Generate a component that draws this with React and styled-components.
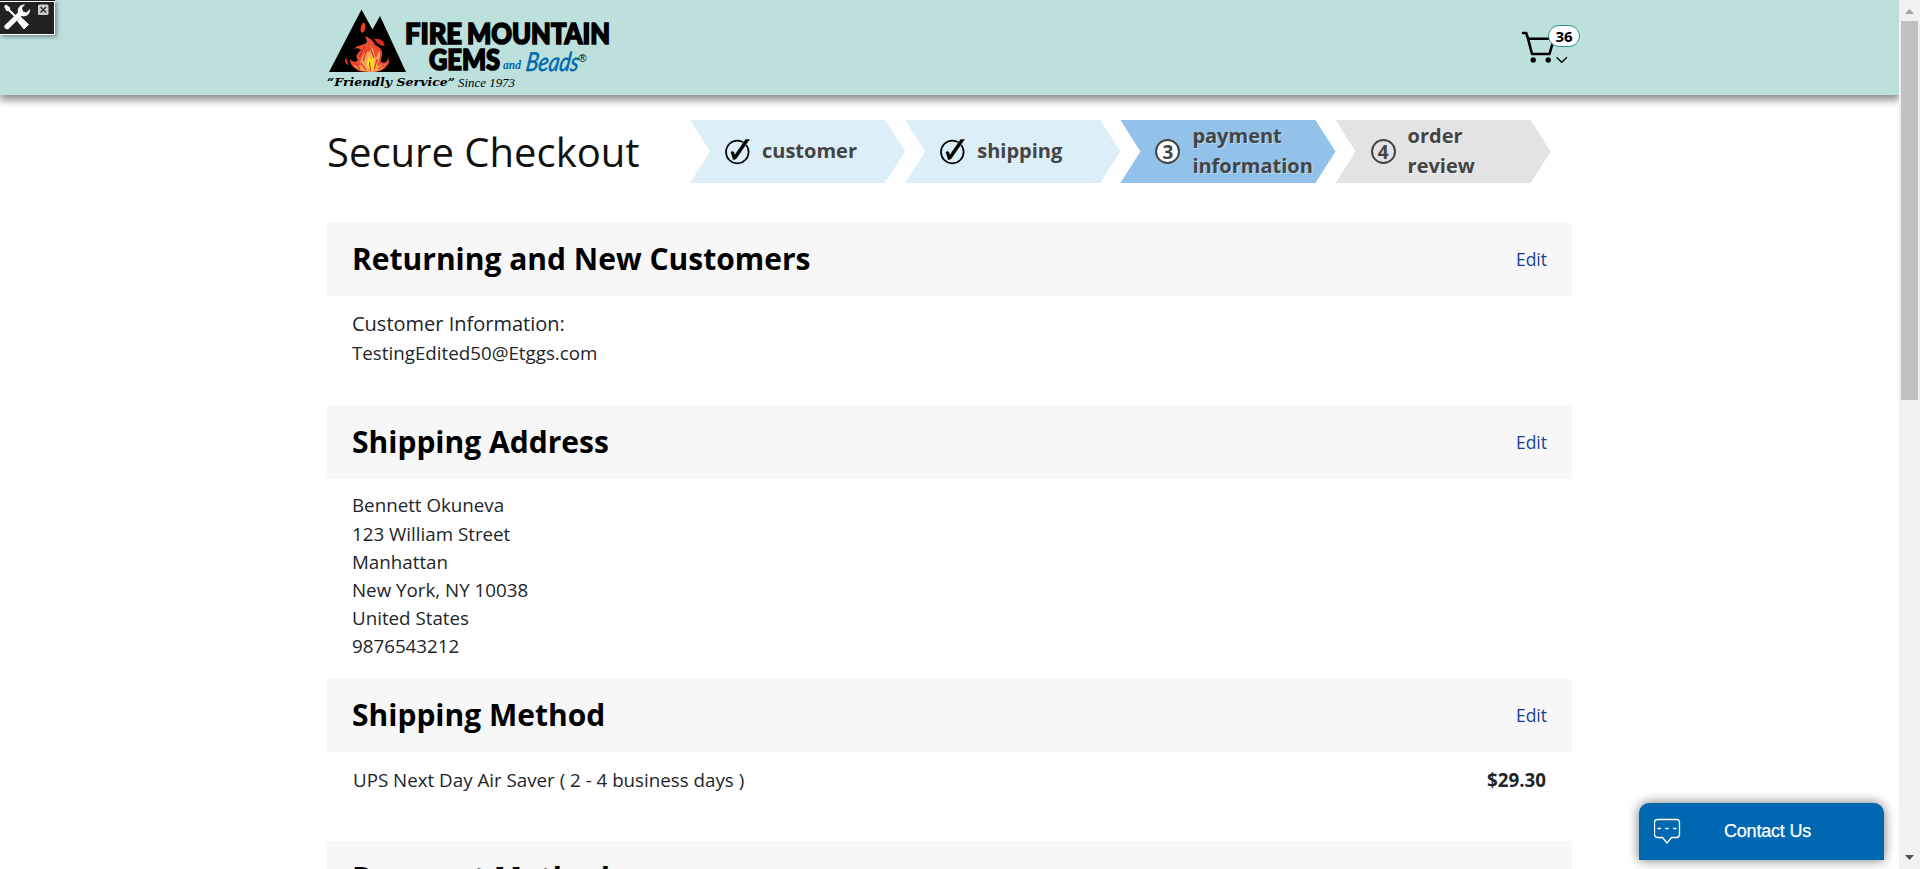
import React from "react";
import styled, { createGlobalStyle, css } from "styled-components";

const GlobalStyle = createGlobalStyle`
  * { box-sizing: border-box; }
  html, body { margin: 0; height: 100%; overflow: hidden; background: #fff; }
  body { font-family: "Open Sans", sans-serif; color: #212529; }
`;

const Viewport = styled.div`
  display: flex;
  height: 869px;
  overflow: hidden;
  position: relative;
`;

const Page = styled.div`
  flex: 1;
  min-width: 0;
  height: 100%;
  overflow: hidden;
`;

const Header = styled.header`
  height: 95px;
  background: #bce1dd;
  box-shadow: 0 4px 8px 1px rgba(0, 0, 0, 0.45);
  position: relative;
`;

const HeaderInner = styled.div`
  width: 1245px;
  height: 95px;
  margin: 0 auto;
  display: flex;
  justify-content: space-between;
  align-items: flex-start;
`;

const Logo = styled.svg`
  display: block;
  flex: none;
`;

const CartButton = styled.div`
  position: relative;
  width: 62px;
  height: 48px;
  margin-top: 22px;
`;

const CartBadge = styled.span`
  position: absolute;
  left: 38px;
  top: 3px;
  width: 32px;
  height: 22px;
  border: 1px solid #27968c;
  border-radius: 11px;
  background: #fff;
  color: #000;
  font-size: 15px;
  font-weight: 700;
  line-height: 20px;
  text-align: center;
`;

const CartIcon = styled.svg`
  display: block;
  overflow: visible;
`;

const Content = styled.main`
  width: 1245px;
  margin: 0 auto;
`;

const TitleRow = styled.div`
  display: flex;
  align-items: flex-start;
  height: 128px;
  padding-top: 25px;
`;

const PageTitle = styled.h1`
  width: 363px;
  margin: 0;
  font-size: 40px;
  font-weight: 400;
  line-height: 64px;
  color: #111;
`;

const Steps = styled.ol`
  display: flex;
  margin: 0;
  padding: 0;
  list-style: none;
`;

const tones = { done: "#dceef8", current: "#92c2ea", upcoming: "#e3e3e3" };

const StepItem = styled.li`
  display: flex;
  align-items: center;
  gap: 12px;
  width: 215.2px;
  height: 63px;
  padding-left: 35px;
  background: ${(p) => tones[p.$tone]};
  clip-path: polygon(0 0, 195px 0, 100% 50%, 195px 100%, 0 100%, 20px 50%);
  color: #444;
  font-size: 20px;
  font-weight: 700;
  line-height: 30px;
  text-shadow: ${(p) => (p.$tone === "done" ? "none" : "1px 1px 0 rgba(255, 255, 255, 0.4)")};
`;

const StepNumber = styled.span`
  width: 25px;
  height: 25px;
  border: 2px solid #444;
  border-radius: 50%;
  background: ${(p) => (p.$filled ? "#fff" : "transparent")};
  font-size: 19px;
  line-height: 22px;
  text-align: center;
  text-shadow: none;
  flex: none;
`;

const StepLabel = styled.span`
  width: 124px;
  position: relative;
  top: -1px;
`;

const CheckIcon = styled.svg`
  flex: none;
  overflow: visible;
`;

const Section = styled.section`
  height: ${(p) => p.$height}px;
`;

const SectionHeader = styled.div`
  display: flex;
  justify-content: space-between;
  align-items: center;
  height: ${(p) => p.$height || 73}px;
  padding: 0 25px ${(p) => (p.$height ? 0 : 1)}px;
  background: #f7f7f7;
`;

const SectionTitle = styled.h2`
  margin: 0;
  font-size: 30px;
  font-weight: 700;
  line-height: 40px;
  color: #000;
`;

const EditLink = styled.a`
  color: #1c3f94;
  font-size: 17.5px;
  line-height: 26px;
`;

const SectionBody = styled.div`
  padding: ${(p) => p.$top}px 25px 0;
  font-size: 18.75px;
  line-height: 28px;
`;

const Line = styled.div`
  ${(p) => p.$lead && css`line-height: 30px;`}
  ${(p) => p.$large && css`font-size: 20px;`}
`;

const MethodRow = styled.div`
  display: flex;
  justify-content: space-between;
  padding: 0 1px;
`;

const Price = styled.strong`
  font-weight: 700;
`;

const Scrollbar = styled.div`
  display: flex;
  flex-direction: column;
  align-items: center;
  justify-content: space-between;
  width: 21px;
  height: 100%;
  background: #f1f1f1;
`;

const ScrollTop = styled.div`
  display: flex;
  flex-direction: column;
`;

const ScrollArrow = styled.svg`
  display: block;
  width: 17px;
  height: 21px;
`;

const ScrollThumb = styled.div`
  width: 17px;
  height: 379px;
  background: #c1c1c1;
`;

const ToolsWidget = styled.div`
  position: absolute;
  left: 0;
  top: 0;
  width: 55px;
  height: 35px;
  background: #222;
  border-top: 1px solid #222;
  box-shadow: inset -1px -1px 0 #fff, inset 0 1px 0 #fff, 2px 2px 4px rgba(0, 0, 0, 0.35);
`;

const ContactButton = styled.div`
  position: absolute;
  left: 1639px;
  top: 803px;
  display: flex;
  align-items: center;
  width: 245px;
  height: 57px;
  padding-left: 15px;
  border-radius: 10px 10px 0 0;
  background: #0067b1;
  box-shadow: 0 0 12px rgba(0, 0, 0, 0.55);
  color: #fff;
  font-family: "Liberation Sans", Arial, sans-serif;
  font-size: 18px;
  letter-spacing: -0.2px;
`;

const ContactLabel = styled.span`
  margin-left: 43px;
  padding-bottom: 2px;
  line-height: 24px;
  -webkit-text-stroke: 0.25px #fff;
`;

function FireMountainLogo() {
  return (
    <Logo width="300" height="95" viewBox="327 0 300 95">
      <path d="M329 72 361.5 9.5 372.5 29.5 380 16 406 72Z" fill="#000" />
      <path d="M346 57C343.500 62 346.500 65 349 64.500 346.500 62 347 60 346 57Z" fill="#ee2e24" />
      <path d="M350 59C352 62 356 63 358 60 355 57 357 53 361 50 359 48 356 48 354 49 358 44 364 46 367 42 367 40 366 38 365 36 370 38 374 41 375 45 379 47 382 49 382 53 382 57 380 60 381 62 384 64 387 62 388 59 389 67 383 71 375 72L361 71.500C354 69 350 65 350 59Z" fill="#ee4b37" />
      <path d="M354 65 361 66C359 61 362 56 367 50 368 54 371 52 370 46 375 49 373 54 376 58L379 51C382 55 378 62 377 66L386 64C383 70 376 72 370 72 362 71 357 70 354 65Z" fill="#faa45b" />
      <path d="M367 66C366 62 368 60 369 56L372 61 373 54C375 58 373 62 374 66L377 60C378 65 375 69 371 71.500Z" fill="#ffe01b" />
      <path d="M370.500 71 369.500 62M374 69 377.500 59M366 70 361 63M363 61 367 50M360 69 355 63M378 69 384 65M374 58 370 47M359 57 365 46" fill="none" stroke="#d9301f" strokeWidth="1.200" />
      <ellipse cx="363" cy="27.800" rx="2.200" ry="4.800" transform="rotate(12 363 27.800)" fill="#f23b2f" />
      <path d="M374 39C380 38 385 41 384.500 46 380 46 377 43 374 39Z" fill="#d92a24" />
      <path d="M388 55C390 60 387 64 382 67 388 68 391 61 388 55Z" fill="#f04e37" />
      <g fontFamily="Lato, sans-serif" fontWeight="900" fill="#000" stroke="#000" strokeWidth="1.700">
        <text x="405" y="44.300" fontSize="28.500" textLength="57" lengthAdjust="spacingAndGlyphs">FIRE</text>
        <text x="467" y="44.300" fontSize="28.500" textLength="143" lengthAdjust="spacingAndGlyphs">MOUNTAIN</text>
        <text x="429" y="70" fontSize="28.500" textLength="71" lengthAdjust="spacingAndGlyphs">GEMS</text>
      </g>
      <g fill="#0067b1">
        <text x="503" y="69" fontSize="13" fontStyle="italic" fontWeight="700" fontFamily="Liberation Serif, serif" textLength="18" lengthAdjust="spacingAndGlyphs">and</text>
        <text transform="translate(525 71) skewX(-8)" fontSize="26" fontStyle="italic" fontWeight="400" fontFamily="Lato, sans-serif" stroke="#0067b1" strokeWidth="0.500" textLength="53" lengthAdjust="spacingAndGlyphs">Beads</text>
      </g>
      <text x="578.500" y="62.300" fontSize="11" fontFamily="Liberation Sans, sans-serif">®</text>
      <text x="327" y="86" fontSize="11.800" fontWeight="700" fontStyle="italic" fontFamily="DejaVu Serif, serif" textLength="128" lengthAdjust="spacingAndGlyphs">“Friendly Service”</text>
      <text x="458" y="86.800" fontSize="11.500" fontStyle="italic" fontFamily="Liberation Serif, serif" textLength="57" lengthAdjust="spacingAndGlyphs">Since 1973</text>
    </Logo>
  );
}

function Cart() {
  return (
    <CartButton>
      <CartIcon width="62" height="48" viewBox="1510 22 62 48" fill="none" stroke="#000">
        <path d="M1523 33h3.200l1.800 5.500L1532 54H1549.500L1553.500 40V38.800H1528" strokeWidth="2.600" strokeLinecap="round" strokeLinejoin="round" />
        <circle cx="1533.200" cy="60" r="2.700" fill="#000" stroke="none" />
        <circle cx="1548.200" cy="60" r="2.700" fill="#000" stroke="none" />
        <path d="M1556.500 57.300 1561.700 62.300 1567 57.300" strokeWidth="1.200" />
      </CartIcon>
      <CartBadge>36</CartBadge>
    </CartButton>
  );
}

function Step({ tone, number, children }) {
  return (
    <StepItem $tone={tone}>
      {tone === "done" ? (
        <CheckIcon width="25" height="25" viewBox="0 0 25 25">
          <circle cx="12.300" cy="13" r="11.300" fill="none" stroke="#000" strokeWidth="1.700" />
          <path d="M5.500 13.200C7 11.400 9.300 11.600 9.900 15.300L20.500 0H25.200L11.600 19.700C10 21 8.300 21.200 7.800 20.700Z" fill="#000" stroke="#dceef8" strokeWidth="0.500" />
        </CheckIcon>
      ) : (
        <StepNumber $filled={tone === "current"}>{number}</StepNumber>
      )}
      <StepLabel>{children}</StepLabel>
    </StepItem>
  );
}

function Panel({ title, height, headerHeight, top, editable = true, children }) {
  return (
    <Section $height={height}>
      <SectionHeader $height={headerHeight}>
        <SectionTitle>{title}</SectionTitle>
        {editable && <EditLink>Edit</EditLink>}
      </SectionHeader>
      <SectionBody $top={top}>{children}</SectionBody>
    </Section>
  );
}

export default function App() {
  return (
    <>
      <GlobalStyle />
      <Viewport>
        <Page>
          <Header>
            <HeaderInner>
              <FireMountainLogo />
              <Cart />
            </HeaderInner>
          </Header>
          <Content>
            <TitleRow>
              <PageTitle>Secure Checkout</PageTitle>
              <Steps>
                <Step tone="done">customer</Step>
                <Step tone="done">shipping</Step>
                <Step tone="current" number="3">payment information</Step>
                <Step tone="upcoming" number="4">order<br />review</Step>
              </Steps>
            </TitleRow>
            <Panel title="Returning and New Customers" height={182} top={13}>
              <Line $lead $large>Customer Information:</Line>
              <Line>TestingEdited50@Etggs.com</Line>
            </Panel>
            <Panel title="Shipping Address" height={274} headerHeight={74} top={11}>
              <Line $lead>Bennett Okuneva</Line>
              <Line>123 William Street</Line>
              <Line>Manhattan</Line>
              <Line>New York, NY 10038</Line>
              <Line>United States</Line>
              <Line>9876543212</Line>
            </Panel>
            <Panel title="Shipping Method" height={162} top={14}>
              <MethodRow>
                <span>UPS Next Day Air Saver ( 2 - 4 business days )</span>
                <Price>$29.30</Price>
              </MethodRow>
            </Panel>
            <Panel title="Payment Method" height={100} headerHeight={74} editable={false} />
          </Content>
        </Page>
        <Scrollbar>
          <ScrollTop>
            <ScrollArrow viewBox="0 0 17 21"><path d="M4 14 8.500 9 13 14Z" fill="#a3a3a3" /></ScrollArrow>
            <ScrollThumb />
          </ScrollTop>
          <ScrollArrow viewBox="0 0 17 21"><path d="M4 7 8.500 12 13 7Z" fill="#505050" /></ScrollArrow>
        </Scrollbar>
        <ToolsWidget>
          <svg width="54" height="33" viewBox="0 1 54 33">
            <path d="M4 6.500 6 4.500 10 7.500V9.500L17 16.500 15.500 18 8.500 11H6.500Z" fill="#fff" />
            <path d="M20.500 17 28.500 24.500 24 29 17.500 21Z" fill="#fff" stroke="#fff" strokeLinejoin="round" />
            <path d="M4.500 25.500 18 12.500C17 8 20 4 25 4.500L22 8 23 11.500 26.500 12.500 30 9C30.500 14 26 17.500 21.500 16L8.500 29C6 30 3.500 27.500 4.500 25.500Z" fill="#fff" />
            <rect x="38" y="4.500" width="10.500" height="10.500" rx="1.500" fill="#ccc" />
            <path d="M40.500 7 46 12.500M46 7 40.500 12.500" stroke="#333" strokeWidth="1.500" />
          </svg>
        </ToolsWidget>
        <ContactButton>
          <svg width="27" height="27" viewBox="1654 819 27 27" fill="none" stroke="#fff">
            <path d="M1657.500 820.500H1676.500Q1679.500 820.500 1679.500 823.500V835.500Q1679.500 838.500 1676.500 838.500H1671.500L1667 844 1662.500 838.500H1657.500Q1654.500 838.500 1654.500 835.500V823.500Q1654.500 820.500 1657.500 820.500Z" strokeWidth="1.300" />
            <path d="M1657.500 829.500h3.500M1665.200 829.500h3.500M1673 829.500h3.500" strokeWidth="1.600" />
          </svg>
          <ContactLabel>Contact Us</ContactLabel>
        </ContactButton>
      </Viewport>
    </>
  );
}
